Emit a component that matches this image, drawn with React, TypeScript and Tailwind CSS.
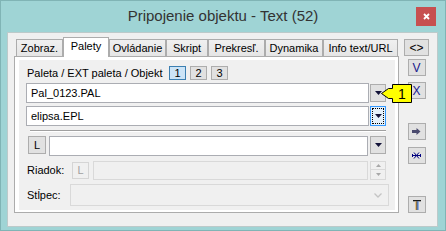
import React from "react";

const Arrow = ({ color = "#14143a" }: { color?: string }) => (
  <svg width="7" height="4" viewBox="0 0 7 4">
    <path d="M0 0H7L3.5 4Z" fill={color} />
  </svg>
);

const Btn = ({
  children,
  className = "",
}: {
  children?: React.ReactNode;
  className?: string;
}) => (
  <div
    className={
      "flex items-center justify-center bg-[#e1e1e1] border border-[#adadad] text-[11px] leading-none " +
      className
    }
  >
    {children}
  </div>
);

const tabs = [
  { t: "Zobraz.", w: "w-[47px]" },
  { t: "Palety", w: "w-[46px]", sel: true },
  { t: "Ovládanie", w: "w-[57px]" },
  { t: "Skript", w: "w-[42px]" },
  { t: "Prekresľ.", w: "w-[57px]" },
  { t: "Dynamika", w: "w-[58px]" },
  { t: "Info text/URL", w: "w-[75px]" },
];

export default function App() {
  return (
    <div className="w-[446px] h-[231px] bg-[#9fd4d5] border border-[#80b4b5] font-['Liberation_Sans',Arial,sans-serif] text-black relative overflow-hidden">
      {/* title bar */}
      <div className="h-[31px] flex items-center justify-center text-[15px] text-[#333333] pb-[1px]">
        Pripojenie objektu - Text (52)
      </div>
      <div className="absolute left-[415px] top-[6px] w-[20px] h-[19px] bg-[#c75050] flex items-center justify-center">
        <svg width="7" height="7" viewBox="0 0 7 7">
          <path d="M1 1L6 6M6 1L1 6" stroke="#fff" strokeWidth="1.8" />
        </svg>
      </div>

      {/* client */}
      <div className="ml-[6px] w-[431px] h-[195px] bg-[#f0f0f0] border border-[#bccaca] flex">
        {/* left column */}
        <div className="pl-[6px] flex flex-col">
          <div className="mt-[4px] h-[19px] flex items-end pl-[2px] relative z-10">
            {tabs.map((tb) =>
              tb.sel ? (
                <div
                  key={tb.t}
                  className={
                    tb.w +
                    " h-[20px] -mb-px bg-white border border-b-0 border-[#acacac] flex items-center justify-center text-[11px] pb-[2px]"
                  }
                >
                  {tb.t}
                </div>
              ) : (
                <div
                  key={tb.t}
                  className={
                    tb.w +
                    " h-[17px] bg-gradient-to-b from-[#f0f0f0] to-[#e5e5e5] border border-b-0 border-[#acacac] flex items-center justify-center text-[11px]"
                  }
                >
                  {tb.t}
                </div>
              )
            )}
          </div>
          {/* panel */}
          <div className="w-[385px] h-[157px] bg-white border border-[#acacac] pt-[3px] pl-[4px] pr-[3px] pb-[2px]">
            <div className="w-full h-full bg-[#f0f0f0] flex flex-col text-[11px]">
              {/* label row */}
              <div className="mt-[6px] h-[14px] flex items-center">
                <div className="w-[150px] pl-[8px]">Paleta / EXT paleta / Objekt</div>
                <div className="flex gap-[4px]">
                  <div className="w-[17px] h-[14px] bg-[#cce4f7] border border-[#3c7fb1] flex items-center justify-center leading-none">
                    1
                  </div>
                  <Btn className="w-[17px] h-[14px]">2</Btn>
                  <Btn className="w-[17px] h-[14px]">3</Btn>
                </div>
              </div>
              {/* input 1 */}
              <div className="mt-[3px] h-[20px] flex items-center pl-[7px]">
                <div className="w-[343px] h-[20px] bg-white border border-[#abadb3] flex items-center pl-[4px]">
                  Pal_0123.PAL
                </div>
                <Btn className="ml-[1px] w-[16px] h-[18px]">
                  <Arrow />
                </Btn>
              </div>
              {/* input 2 */}
              <div className="mt-[3px] h-[20px] flex items-center pl-[7px]">
                <div className="w-[343px] h-[20px] bg-white border border-[#abadb3] flex items-center pl-[4px]">
                  elipsa.EPL
                </div>
                <div className="ml-[1px] w-[16px] h-[20px] bg-[#e5f1fb] border border-[#3399ff] flex items-center justify-center outline-1 outline-dotted outline-black -outline-offset-[3px]">
                  <Arrow />
                </div>
              </div>
              {/* separator */}
              <div className="mt-[4px] ml-[11px] w-[356px]">
                <div className="h-px bg-[#a0a0a0]" />
                <div className="h-px bg-white" />
              </div>
              {/* L row */}
              <div className="mt-[4px] h-[20px] flex items-start">
                <Btn className="ml-[9px] w-[18px] h-[18px] text-[11px]">L</Btn>
                <div className="ml-[3px] w-[319px] h-[20px] bg-white border border-[#abadb3]" />
                <Btn className="ml-[2px] w-[16px] h-[18px]">
                  <Arrow />
                </Btn>
              </div>
              {/* Riadok row */}
              <div className="mt-[5px] h-[19px] flex items-center">
                <div className="w-[53px] pl-[8px]">Riadok:</div>
                <div className="w-[17px] h-[17px] border border-[#d5d5d5] flex items-center justify-center text-[#a0a0a0] leading-none">
                  L
                </div>
                <div className="ml-[4px] w-[275px] h-[19px] border border-[#d9d9d9]" />
                <div className="ml-[2px] w-[16px] h-[19px] flex flex-col">
                  <div className="h-[9px] border border-[#d9d9d9] flex items-center justify-center">
                    <svg width="5" height="3" viewBox="0 0 5 3">
                      <path d="M0 3H5L2.5 0Z" fill="#a8a8a8" />
                    </svg>
                  </div>
                  <div className="h-[10px] border border-t-0 border-[#d9d9d9] flex items-center justify-center">
                    <svg width="5" height="3" viewBox="0 0 5 3">
                      <path d="M0 0H5L2.5 3Z" fill="#a8a8a8" />
                    </svg>
                  </div>
                </div>
              </div>
              {/* Stlpec row */}
              <div className="mt-[4px] h-[22px] flex items-center">
                <div className="w-[51px] pl-[8px]">Stĺpec:</div>
                <div className="w-[319px] h-[22px] border border-[#d9d9d9] flex items-center justify-end pr-[6px]">
                  <svg width="8" height="5" viewBox="0 0 8 5">
                    <path d="M0.5 0.5L4 4L7.5 0.5" stroke="#c4c4c4" strokeWidth="1.3" fill="none" />
                  </svg>
                </div>
              </div>
            </div>
          </div>
        </div>

        {/* right column */}
        <div className="ml-[5px] w-[25px] flex flex-col items-center pt-[6px]">
          <Btn className="w-[25px] h-[17px] text-[12px]">&lt;&gt;</Btn>
          <Btn className="mt-[3px] w-[18px] h-[17px] text-[12px] text-[#1a1a8c]">V</Btn>
          <Btn className="mt-[6px] w-[18px] h-[17px] text-[12px] text-[#1a1a8c]">X</Btn>
          <Btn className="mt-[24px] w-[18px] h-[17px]">
            <svg width="9" height="7" viewBox="0 0 9 7">
              <path d="M0 2H4.5V0L8.5 3.5L4.5 7V5H0Z" fill="#4a4a6e" />
            </svg>
          </Btn>
          <Btn className="mt-[7px] w-[18px] h-[17px]">
            <svg width="9" height="7" viewBox="0 0 9 7">
              <path
                d="M0.5 3.5H8.5M2 0.5L7 6.5M7 0.5L2 6.5M0.5 2V5M8.5 2V5"
                stroke="#000080"
                strokeWidth="1"
                fill="none"
              />
            </svg>
          </Btn>
          <Btn className="mt-[32px] w-[18px] h-[17px]">
            <svg width="8" height="10" viewBox="0 0 8 10">
              <rect x="0" y="0" width="8" height="1.3" fill="#1a1a1a" />
              <rect x="2.5" y="1.3" width="1" height="8.7" fill="#f0a020" />
              <rect x="3.5" y="1.3" width="1" height="8.7" fill="#1a1a1a" />
              <rect x="4.5" y="1.3" width="1" height="8.7" fill="#3070e0" />
            </svg>
          </Btn>
        </div>
      </div>

      {/* tooltip callout */}
      <svg
        className="absolute left-[379px] top-[82px]"
        width="33"
        height="21"
        viewBox="0 0 33 21"
      >
        <path
          d="M12.5 1.5H31.5V19.5H12.5V15.5H8.5L1.5 10.5L8.5 5.5H12.5Z"
          fill="#ffff00"
          stroke="#000"
          strokeWidth="1"
        />
      </svg>
      <div className="absolute left-[392px] top-[84px] w-[18px] h-[17px] flex items-center justify-center text-[14px] leading-none">
        1
      </div>
    </div>
  );
}
